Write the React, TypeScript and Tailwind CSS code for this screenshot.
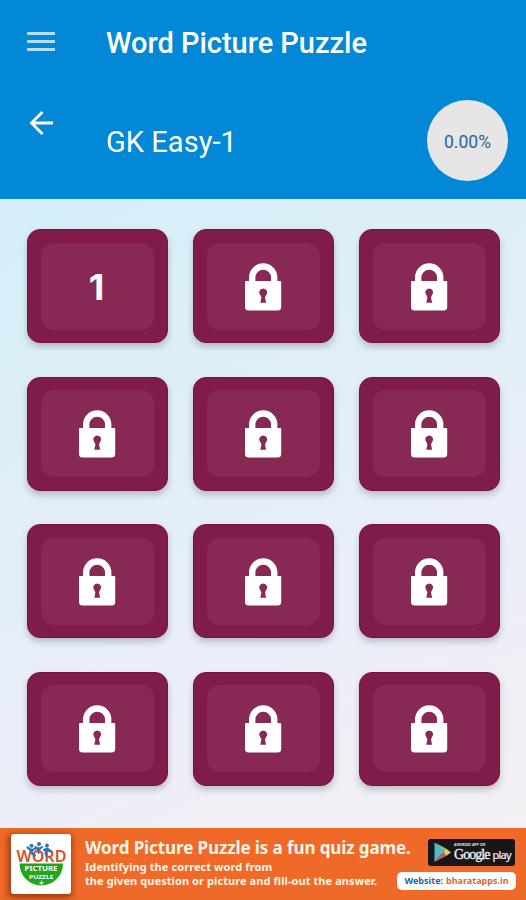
const tiles = Array.from({ length: 12 }, (_, i) => i);

function LockIcon() {
  return (
    <svg className="h-[49px] w-[38px]" viewBox="0 0 38 49" aria-hidden="true">
      <path d="M8.2 23V15.500a11 11 0 0 1 22 0V23" fill="none" stroke="#fff" strokeWidth="6.400" />
      <path
        fill="#fff"
        fillRule="evenodd"
        d="M2 19h34.400q.8 0 .8.8V45q0 3.600-3.600 3.600H4.600Q1 48.600 1 45V19.800q0-.8 1-.8ZM19.200 26.400a4 4 0 0 0-2.600 7L17.400 35.500 16.300 40.800h5.800L21 35.500 21.800 33.400a4 4 0 0 0-2.600-7Z"
      />
    </svg>
  );
}

function Tile({ index }: { index: number }) {
  return (
    <button className="flex h-[114px] items-center justify-center rounded-[13px] border border-[#7b0f3e] bg-[#801c4a] shadow-[0_4px_6px_rgba(60,70,90,0.28)]">
      <span className="flex h-[87px] w-[113px] items-center justify-center rounded-[13px] bg-[#882854]">
        {index === 0 ? (
          <span className="pt-[2px] pr-px font-[Inter,sans-serif] text-[36px] leading-none font-bold text-white">1</span>
        ) : (
          <LockIcon />
        )}
      </span>
    </button>
  );
}

function AppLogo() {
  return (
    <div className="flex h-[60px] w-[60px] shrink-0 items-center justify-center rounded-[3px] bg-white shadow-[-1px_2px_6px_2px_rgba(100,30,0,0.6)]">
      <svg className="h-[60px] w-[60px]" viewBox="0 0 60 60">
        <path d="M8.500 29.500h43.500a21.700 22 0 0 1-43.500 0Z" fill="#20a51b" />
        <g fontFamily="Noto Sans, sans-serif" fontWeight="700">
          <text x="5.500" y="28" fontSize="16" fontWeight="600" fill="#d94f22" textLength="50" lengthAdjust="spacingAndGlyphs">WORD</text>
          <text x="13.500" y="37" fontSize="7" fill="#fff" textLength="33" lengthAdjust="spacingAndGlyphs">PICTURE</text>
          <text x="18" y="44.500" fontSize="6" fill="#fff" textLength="24.500" lengthAdjust="spacingAndGlyphs">PUZZLE</text>
        </g>
        <path d="M30.500 46.800v4M28.500 48.800h4" stroke="#fff" strokeWidth="1.200" />
        <g stroke="#2878b8" strokeWidth="2.200" strokeLinecap="round" strokeLinejoin="round" fill="none">
          <path d="M16.500 13.500l4 3 4-2M20.500 15.500l.5 4 3 2M24.500 13l3 3 3.500-3M27.500 14v5M33 16l3-1.500 4 3M36 15l-1.500 4 1 2.500" />
        </g>
        <g fill="#2878b8">
          <circle cx="20.500" cy="11.800" r="2" />
          <circle cx="28" cy="10" r="2.100" />
          <circle cx="36" cy="11.500" r="1.900" />
        </g>
      </svg>
    </div>
  );
}

function PlayBadge() {
  return (
    <div className="flex h-[27px] w-[87px] items-center rounded-[3px] bg-[#171719] pl-[6px] font-normal text-[#f4f4f4]">
      <svg className="h-[21px] w-[17px] shrink-0" viewBox="0 0 17 21">
        <path d="M.5.500 9.500 10.500.500 20Z" fill="#55b7d6" />
        <path d="M.5.500 12 6.500 9.500 10.500Z" fill="#74c49b" />
        <path d="M12 6.500 17 10.500 12 14 9.500 10.500Z" fill="#edc653" />
        <path d="M.5 20 12 14 9.500 10.500Z" fill="#d05b50" />
      </svg>
      <div className="ml-[3px] flex flex-col whitespace-nowrap">
        <span className="text-[3.600px] leading-[5px] font-semibold">ANDROID APP ON</span>
        <div className="flex items-baseline gap-[3px] leading-[15px]">
          <span className="font-['Liberation_Serif',serif] text-[14px] tracking-[-0.950px] [-webkit-text-stroke:0.300px_#f4f4f4]">Google</span>
          <span className="text-[11px] tracking-[-0.750px] [-webkit-text-stroke:0.200px_#f4f4f4]">play</span>
        </div>
      </div>
    </div>
  );
}

export default function App() {
  return (
    <div className="flex h-[900px] w-[526px] flex-col overflow-hidden bg-[#ececf4] font-[Roboto,sans-serif]">
      <header className="h-[199px] shrink-0 bg-[#0288d6] text-white">
        <div className="flex h-[84px] items-center pl-[27px]">
          <button aria-label="Menu" className="flex w-7 flex-col gap-[5px] pb-[2px]">
            <span className="h-[3px] bg-[#b5def5]" />
            <span className="h-[3px] bg-[#b5def5]" />
            <span className="h-[3px] bg-[#b5def5]" />
          </button>
          <h1 className="ml-[51px] pt-[2px] text-[29px] leading-none font-medium tracking-[-0.020px] whitespace-nowrap">Word Picture Puzzle</h1>
        </div>
        <div className="flex h-[115px] items-center pr-[18px] pl-[29px]">
          <svg className="mb-[37px] h-[26px] w-[26px]" viewBox="0 0 26 26" fill="none" stroke="#fff" strokeWidth="2.800">
            <path d="M24 13H3M13.500 2 2.500 13l11 11" />
          </svg>
          <h2 className="ml-[51px] pt-[2px] text-[29px] leading-none font-normal tracking-[0.050px] whitespace-nowrap">GK Easy-1</h2>
          <div className="mb-[2px] ml-auto flex h-[81px] w-[81px] items-center justify-center rounded-full bg-[#e6e6e6] pt-[3px] text-[17.500px] text-[#2b6596]">0.00%</div>
        </div>
      </header>

      <main className="grid h-[628.500px] shrink-0 grid-cols-[repeat(3,141px)] content-start gap-x-[25px] gap-y-[33.500px] bg-[linear-gradient(155deg,#d5eefa_0%,#deeef7_30%,#eaeef8_62%,#f4f0f4_100%)] pt-[30.400px] pl-[26.500px]">
        {tiles.map((i) => (
          <Tile key={i} index={i} />
        ))}
      </main>

      <footer className="flex h-[72.500px] shrink-0 items-center bg-[#ef6a28] pl-[11px] font-['Noto_Sans',sans-serif] font-bold text-[#fff5e9]">
        <AppLogo />
        <div className="ml-[14px] flex w-[312px] shrink-0 flex-col pb-[2px] whitespace-nowrap">
          <p className="text-[17px] leading-[21px] tracking-[-0.100px]">Word Picture Puzzle is a fun quiz game.</p>
          <p className="mt-[2px] text-[11px] leading-[14.500px] tracking-[0.080px]">Identifying the correct word from</p>
          <p className="text-[11px] leading-[14.500px] tracking-[0.080px]">the given question or picture and fill-out the answer.</p>
        </div>
        <div className="flex w-[119px] shrink-0 flex-col items-end gap-[6px] pt-px">
          <div className="pr-px">
            <PlayBadge />
          </div>
          <div className="flex h-[18px] w-[119px] shrink-0 items-center justify-center gap-[3px] rounded-[5px] bg-white text-[9px] whitespace-nowrap">
            <span className="text-[#2462ae]">Website:</span>
            <span className="text-[#dc672f]">bharatapps.in</span>
          </div>
        </div>
      </footer>
    </div>
  );
}
